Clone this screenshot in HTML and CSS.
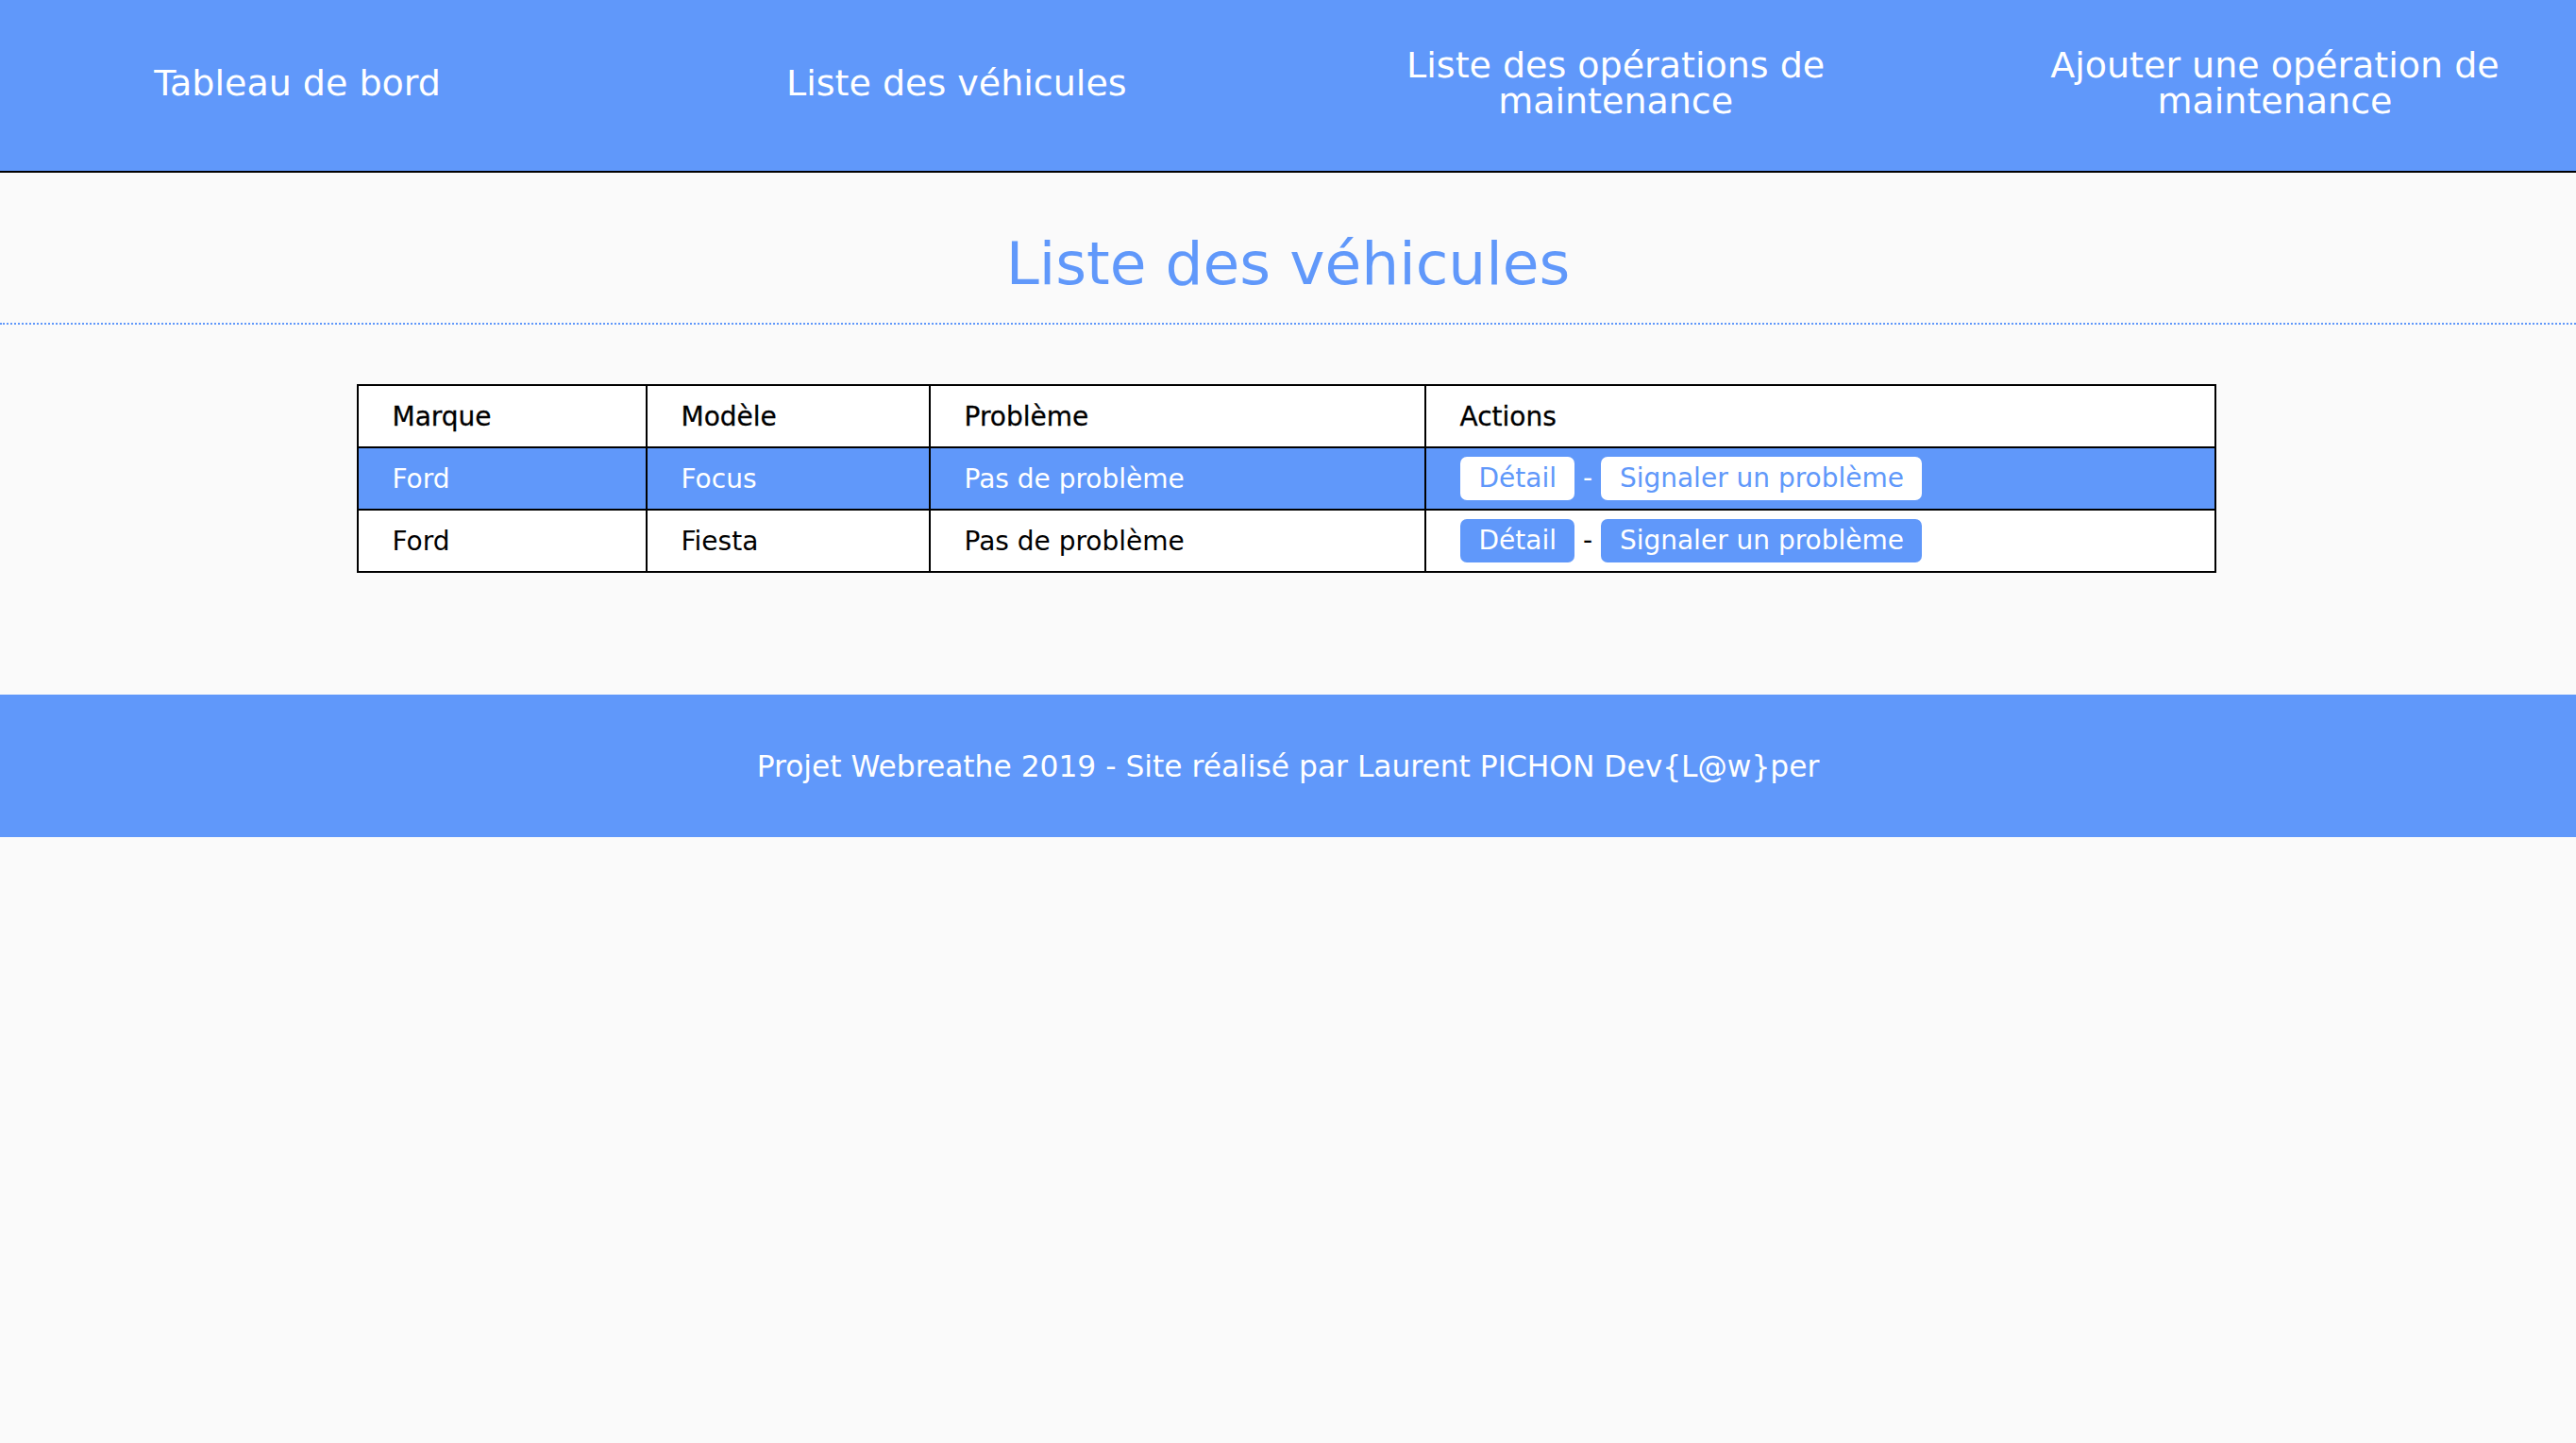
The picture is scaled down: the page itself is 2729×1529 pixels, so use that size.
FILE: index.html
```html
<!DOCTYPE html>
<html lang="fr">
<head>
<meta charset="utf-8">
<title>Liste des véhicules</title>
<link rel="stylesheet" href="styles.css">
</head>
<body>
<header class="site-header">
  <nav class="main-nav">
    <a class="nav-item" href="#">Tableau de bord</a>
    <a class="nav-item" href="#">Liste des véhicules</a>
    <a class="nav-item" href="#">Liste des opérations de maintenance</a>
    <a class="nav-item" href="#">Ajouter une opération de maintenance</a>
  </nav>
</header>
<main class="content">
  <h1 class="page-title">Liste des véhicules</h1>
  <table class="vehicles">
    <colgroup>
      <col class="c-marque">
      <col class="c-modele">
      <col class="c-probleme">
      <col class="c-actions">
    </colgroup>
    <thead>
      <tr>
        <th>Marque</th>
        <th>Modèle</th>
        <th>Problème</th>
        <th>Actions</th>
      </tr>
    </thead>
    <tbody>
      <tr class="active">
        <td>Ford</td>
        <td>Focus</td>
        <td>Pas de problème</td>
        <td><a class="btn" href="#">Détail</a> - <a class="btn" href="#">Signaler un problème</a></td>
      </tr>
      <tr>
        <td>Ford</td>
        <td>Fiesta</td>
        <td>Pas de problème</td>
        <td><a class="btn" href="#">Détail</a> - <a class="btn" href="#">Signaler un problème</a></td>
      </tr>
    </tbody>
  </table>
</main>
<footer class="site-footer">
  <p>Projet Webreathe 2019 - Site réalisé par Laurent PICHON Dev{L@w}per</p>
</footer>
</body>
</html>
```
FILE: styles.css
```css
* { box-sizing: border-box; }

html, body {
  margin: 0;
  padding: 0;
  background: #fafafa;
  font-family: "DejaVu Sans", "Liberation Sans", sans-serif;
  color: #000;
}

.site-header {
  background: #6098fa;
  height: 183px;
  border-bottom: 2px solid #000;
  padding-bottom: 5px;
  display: flex;
  align-items: center;
}

.main-nav {
  width: 100%;
  display: flex;
  justify-content: space-between;
  align-items: center;
  padding: 0 39px 0 35px;
}

.nav-item {
  width: 560px;
  text-align: center;
  color: #fff;
  text-decoration: none;
  font-size: 38px;
  line-height: 38px;
}

.content {
  padding-bottom: 129px;
}

.page-title {
  margin: 0;
  padding: 60px 0 26px;
  text-align: center;
  color: #6098fa;
  font-weight: normal;
  font-size: 63px;
  line-height: 73px;
  border-bottom: 2px dotted #6098fa;
}

.vehicles {
  width: 1968px;
  margin: 63px auto 0;
  position: relative;
  left: -2px;
  border-collapse: collapse;
  table-layout: fixed;
  background: #fff;
  font-size: 28px;
}

.c-marque { width: 306px; }
.c-modele { width: 300px; }
.c-probleme { width: 525px; }
.c-actions { width: 837px; }

.vehicles th,
.vehicles td {
  border: 2px solid #000;
  height: 66px;
  padding: 0 36px;
  text-align: left;
  vertical-align: middle;
  font-weight: normal;
  white-space: nowrap;
}

.vehicles th {
  -webkit-text-stroke: 0.3px #000;
}

.vehicles tr.active td {
  background: #6098fa;
  color: #fff;
}

.btn {
  display: inline-block;
  padding: 6px 19px 7px 20px;
  border-radius: 7px;
  background: #6098fa;
  color: #fff;
  text-decoration: none;
}

.vehicles tr.active .btn {
  background: #fff;
  color: #6098fa;
}

.site-footer {
  background: #6098fa;
  height: 151px;
  display: flex;
  align-items: center;
  justify-content: center;
  color: #fff;
}

.site-footer p {
  margin: 0;
  font-size: 31.3px;
}
```
